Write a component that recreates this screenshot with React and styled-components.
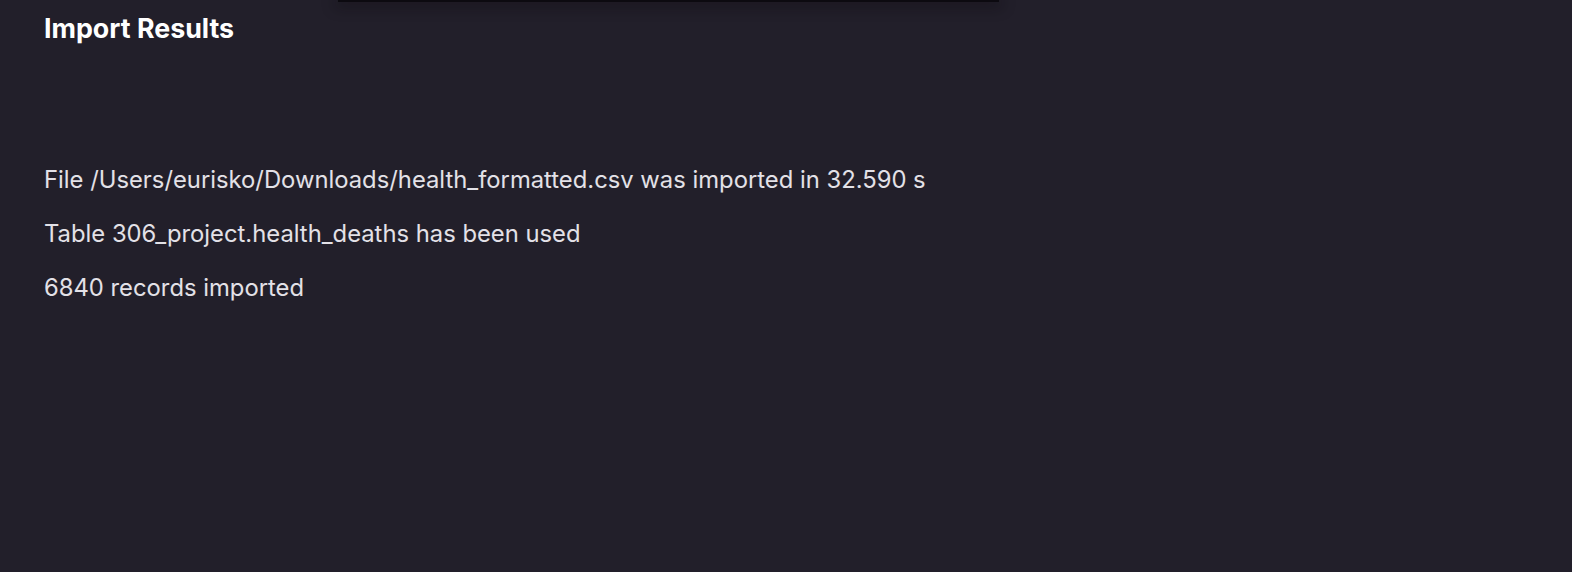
import React from 'react'
import styled, { createGlobalStyle } from 'styled-components'

const GlobalStyle = createGlobalStyle`
  html, body {
    margin: 0;
    padding: 0;
    background: #221f2a;
  }
  body {
    font-family: Inter, "Noto Sans", "Liberation Sans", sans-serif;
    -webkit-font-smoothing: antialiased;
  }
`

const Page = styled.div`
  position: relative;
  width: 1572px;
  height: 572px;
  background: #221f2a;
  overflow: hidden;
`

// edge of the sheet above, lies over the page
const SheetEdge = styled.div`
  position: absolute;
  top: 0;
  left: 338px;
  width: 661px;
  height: 2px;
  background: #0c0a10;
  box-shadow: 0 2px 14px 3px rgba(10, 8, 14, 0.45);
`

const Content = styled.div`
  display: flex;
  flex-direction: column;
  padding: 12px 44px 0;
`

const Title = styled.h2`
  margin: 0;
  font-size: 26.8px;
  font-weight: 700;
  color: #ffffff;
  line-height: 32px;
`

const Messages = styled.div`
  display: flex;
  flex-direction: column;
  gap: 24px;
  margin-top: 121px;
`

const Line = styled.div`
  font-size: 23.8px;
  line-height: 30px;
  color: #e3e1e7;
`

const lines = [
  'File /Users/eurisko/Downloads/health_formatted.csv was imported in 32.590 s',
  'Table 306_project.health_deaths has been used',
  '6840 records imported',
]

const App = () => {
  return (
    <Page>
      <GlobalStyle />
      <SheetEdge />
      <Content>
        <Title>Import Results</Title>
        <Messages>
          {lines.map((l) => (
            <Line key={l}>{l}</Line>
          ))}
        </Messages>
      </Content>
    </Page>
  )
}

export default App
